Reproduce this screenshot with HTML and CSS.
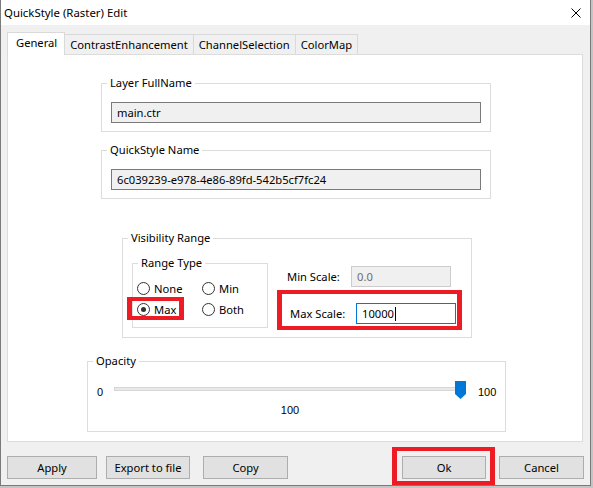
FILE: index.html
```html
<!DOCTYPE html>
<html lang="en">

<head>
    <meta charset="UTF-8">
    <title>QuickStyle (Raster) Edit</title>
    <link rel="stylesheet" href="styles.css">
</head>

<body>
    <div class="window">
        <div class="titlebar">
            <span class="title">QuickStyle (Raster) Edit</span>
            <svg class="close" width="10" height="10" viewBox="0 0 10 10">
                <path d="M0.5 0.5 L9.5 9.5 M9.5 0.5 L0.5 9.5" stroke="#000" stroke-width="1" fill="none"/>
            </svg>
        </div>

        <div class="tabs">
            <div class="tab active">General</div>
            <div class="tab">ContrastEnhancement</div>
            <div class="tab">ChannelSelection</div>
            <div class="tab">ColorMap</div>
        </div>

        <div class="page">
            <fieldset class="group name-group">
                <legend>Layer FullName</legend>
                <div class="field readonly">main.ctr</div>
            </fieldset>

            <fieldset class="group name-group">
                <legend>QuickStyle Name</legend>
                <div class="field readonly">6c039239-e978-4e86-89fd-542b5cf7fc24</div>
            </fieldset>

            <fieldset class="group range-group">
                <legend>Visibility Range</legend>
                <div class="range-body">
                    <fieldset class="group type-group">
                        <legend>Range Type</legend>
                        <div class="radio-grid">
                            <label class="radio"><span class="circle"></span>None</label>
                            <label class="radio"><span class="circle"></span>Min</label>
                            <div class="mark mark-radio">
                                <label class="radio"><span class="circle checked"></span>Max</label>
                            </div>
                            <label class="radio"><span class="circle"></span>Both</label>
                        </div>
                    </fieldset>

                    <div class="scales">
                        <div class="scale-row min-row">
                            <span class="scale-label">Min Scale:</span>
                            <div class="field disabled">0.0</div>
                        </div>
                        <div class="mark scale-row max-row">
                            <span class="scale-label">Max Scale:</span>
                            <div class="field focused">10000<span class="caret"></span></div>
                        </div>
                    </div>
                </div>
            </fieldset>

            <fieldset class="group opacity-group">
                <legend>Opacity</legend>
                <div class="slider-row">
                    <span class="tick tick-min">0</span>
                    <div class="slider">
                        <div class="track-area">
                            <div class="track"></div>
                            <svg class="thumb" width="11" height="18" viewBox="0 0 11 18">
                                <path d="M0 0 H11 V13 L5.5 18 L0 13 Z" fill="#0078d7"/>
                            </svg>
                        </div>
                        <div class="tick slider-value">100</div>
                    </div>
                    <span class="tick tick-max">100</span>
                </div>
            </fieldset>
        </div>

        <div class="buttons">
            <button class="btn btn-apply">Apply</button>
            <button class="btn btn-export">Export to file</button>
            <button class="btn btn-copy">Copy</button>
            <div class="mark mark-ok">
                <button class="btn btn-ok">Ok</button>
            </div>
            <button class="btn btn-cancel">Cancel</button>
        </div>
    </div>
</body>

</html>
```

FILE: styles.css
```css
* {
    box-sizing: border-box;
}

body {
    margin: 0;
    background-color: #c4c4c4;
    font-family: "Noto Sans", sans-serif;
    font-size: 11.2px;
    color: #000;
}

.window {
    width: 591px;
    height: 486px;
    display: flex;
    flex-direction: column;
    background-color: #f0f0f0;
    border: 1px solid #7a7a7a;
    border-top: none;
}

/* title bar */
.titlebar {
    height: 25px;
    flex: none;
    display: flex;
    align-items: center;
    justify-content: space-between;
    padding: 0 9px 0 3px;
    background-color: #fff;
}

.title {
    font-size: 11.4px;
    line-height: 25px;
}

/* tab strip */
.tabs {
    height: 29px;
    flex: none;
    display: flex;
    align-items: flex-end;
    padding-left: 6px;
}

.tab {
    height: 20px;
    line-height: 19px;
    padding: 0 5px;
    border: 1px solid #d9d9d9;
    border-left: none;
    border-bottom: none;
    white-space: nowrap;
}

.tab.active {
    position: relative;
    z-index: 1;
    height: 23px;
    line-height: 20px;
    margin-bottom: -1px;
    padding: 0 7px 0 8px;
    border-left: 1px solid #d9d9d9;
    background-color: #fff;
}

.page {
    height: 388px;
    flex: none;
    margin: 0 7px 0 6px;
    border: 1px solid #dcdcdc;
    background-color: #fff;
}

/* group boxes */
.group {
    margin: 0;
    padding: 0;
    min-inline-size: 0;
    border: 1px solid #dcdcdc;
}

.group legend {
    margin-left: 5px;
    padding: 0 3px;
    line-height: 16px;
}

.name-group {
    width: 390px;
    margin: 20px 0 0 93px;
}

.name-group + .name-group {
    margin-top: 10px;
}

.name-group .field {
    margin: 11px 9px 8px;
}

.field {
    height: 21px;
    line-height: 19px;
    padding: 0 5px;
    border: 1px solid #7a7a7a;
    background-color: #f0f0f0;
    white-space: nowrap;
}

.field.disabled {
    width: 100px;
    border-color: #cccccc;
    color: #6d6d6d;
}

.field.focused {
    width: 100px;
    border-color: #0078d7;
    background-color: #fff;
}

.caret {
    display: inline-block;
    width: 1px;
    height: 14px;
    margin-left: 1px;
    vertical-align: -3px;
    background-color: #000;
}

/* visibility range */
.range-group {
    width: 350px;
    margin: 31px 0 0 114px;
}

.range-body {
    display: flex;
    align-items: flex-start;
    gap: 9px;
    padding: 9px 9px 7px;
}

.type-group {
    width: 136px;
    flex: none;
}

.radio-grid {
    display: grid;
    grid-template-columns: 65px auto;
    row-gap: 8px;
    padding: 11px 4px;
}

.radio {
    display: flex;
    align-items: center;
    gap: 4px;
    height: 13px;
    line-height: 13px;
}

.circle {
    width: 13px;
    height: 13px;
    flex: none;
    display: flex;
    align-items: center;
    justify-content: center;
    border: 1px solid #333;
    border-radius: 50%;
    background-color: #fff;
}

.circle.checked::after {
    content: "";
    width: 5px;
    height: 5px;
    border-radius: 50%;
    background-color: #333;
}

/* red call-out frames */
.mark {
    border: solid #ed1c24;
    border-width: 4px 5px;
}

.mark-radio {
    justify-self: start;
    padding: 2px 3px 0 5px;
    margin: -6px 0 -4px -10px;
}

.scales {
    width: 185px;
    flex: none;
    margin-top: 11px;
}

.scale-row {
    display: flex;
    align-items: center;
}

.min-row {
    padding-left: 10px;
}

.min-row .scale-label {
    width: 64px;
}

.max-row {
    margin-top: 3px;
    padding: 9px 1px 2px 8px;
}

.max-row .scale-label {
    width: 66px;
}

/* opacity slider */
.opacity-group {
    width: 419px;
    margin: 15px 0 0 79px;
}

.slider-row {
    display: flex;
    align-items: flex-start;
    padding: 12px 0 13px 9px;
}

.tick {
    font-family: "Liberation Sans", sans-serif;
    font-size: 11px;
    line-height: 16px;
}

.tick-min {
    width: 17px;
    margin-top: 3px;
}

.tick-max {
    margin: 3px 0 0 12px;
}

.slider {
    width: 352px;
}

.track-area {
    position: relative;
    height: 18px;
    padding-top: 6px;
}

.track {
    width: 349px;
    height: 4px;
    border: 1px solid #d6d6d6;
    background-color: #e7eaea;
}

.thumb {
    position: absolute;
    top: 0;
    right: 0;
}

.slider-value {
    margin-top: 3px;
    text-align: center;
}

/* dialog buttons */
.buttons {
    display: flex;
    align-items: flex-start;
    padding: 14px 6px 0 6px;
}

.btn {
    height: 23px;
    padding: 0;
    font-family: inherit;
    font-size: inherit;
    line-height: 21px;
    color: #000;
    text-align: center;
    border: 1px solid #adadad;
    background-color: #e1e1e1;
}

.btn-apply {
    width: 90px;
}

.btn-export {
    width: 84px;
    margin-left: 9px;
}

.btn-copy {
    width: 85px;
    margin-left: 13px;
}

.mark-ok {
    margin: -9px 0 -6px auto;
    padding: 5px 4px 2px 5px;
}

.btn-ok {
    display: block;
    width: 84px;
}

.btn-cancel {
    width: 85px;
    margin-left: 4px;
}
```
